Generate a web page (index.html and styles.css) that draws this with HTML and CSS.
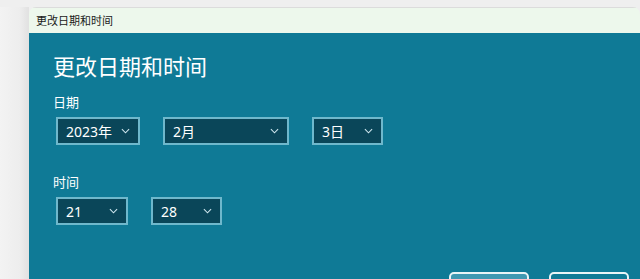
FILE: index.html
```html
<!DOCTYPE html>
<html lang="zh-CN">
<head>
    <meta charset="UTF-8">
    <meta name="viewport" content="width=device-width, initial-scale=1.0">
    <title>更改日期和时间</title>
    <link rel="stylesheet" href="styles.css">
</head>
<body>
    <div class="desk">
        <div class="side"></div>
        <div class="window">
            <div class="titlebar">更改日期和时间</div>
            <div class="content">
                <h2>更改日期和时间</h2>
                <p class="label">日期</p>
                <div class="row">
                    <div class="picker year">2023年 <svg viewBox="0 0 10 6"><path d="M1 1l4 4 4-4"/></svg></div>
                    <div class="picker month">2月 <svg viewBox="0 0 10 6"><path d="M1 1l4 4 4-4"/></svg></div>
                    <div class="picker day">3日 <svg viewBox="0 0 10 6"><path d="M1 1l4 4 4-4"/></svg></div>
                </div>
                <p class="label time-label">时间</p>
                <div class="row">
                    <div class="picker hour">21 <svg viewBox="0 0 10 6"><path d="M1 1l4 4 4-4"/></svg></div>
                    <div class="picker minute">28 <svg viewBox="0 0 10 6"><path d="M1 1l4 4 4-4"/></svg></div>
                </div>
                <div class="buttons">
                    <button class="btn primary"></button>
                    <button class="btn"></button>
                </div>
            </div>
        </div>
    </div>
</body>
</html>
```

FILE: styles.css
```css
body {
    margin: 0;
    background: #efefef;
    font-family: "Segoe UI", "Noto Sans", "Noto Sans CJK SC", sans-serif;
    overflow: hidden;
}
.desk {
    display: flex;
    height: 279px;
    padding-top: 7px;
    box-sizing: border-box;
}
.side {
    width: 29px;
    background: linear-gradient(to right, #f3f3f3 0, #ededed 20px, #e2e2e2 28px);
}
.window {
    flex: 1;
    display: flex;
    flex-direction: column;
    border-radius: 7px 7px 0 0;
    overflow: hidden;
}
.titlebar {
    height: 26px;
    line-height: 25px;
    padding-left: 7px;
    background: #edf8ec;
    border-top: 1px solid #dcdcdc;
    box-sizing: border-box;
    font-size: 11px;
    color: #1a1a1a;
}
.content {
    flex: 1;
    background: #0f7a96;
    padding: 17px 11px 0 24px;
    color: #fff;
    display: flex;
    flex-direction: column;
}
h2 {
    margin: 0;
    font-size: 22px;
    font-weight: normal;
    line-height: 33px;
}
.label {
    margin: 9px 0 5px;
    font-size: 13px;
    line-height: 20px;
}
.time-label {
    margin-top: 27px;
}
.row {
    display: flex;
    gap: 23px;
    padding-left: 3px;
}
.picker {
    display: flex;
    align-items: center;
    justify-content: space-between;
    height: 28px;
    box-sizing: border-box;
    border: 2px solid #6fb8cc;
    background: #0a4659;
    padding: 0 8px 0 8px;
    font-size: 14px;
}
.picker svg {
    width: 9px;
    height: 6px;
    fill: none;
    stroke: #cfe6ee;
    stroke-width: 1.2;
}
.year { width: 84px; }
.month { width: 126px; }
.day { width: 71px; }
.hour { width: 72px; }
.minute { width: 71px; }
.buttons {
    margin-top: auto;
    display: flex;
    justify-content: flex-end;
    gap: 20px;
    height: 7px;
}
.btn {
    width: 80px;
    height: 30px;
    border: 2px solid #e9f4f7;
    border-radius: 5px;
    background: #0f7a96;
    padding: 0;
}
.btn.primary {
    background: #3e98b2;
}
```
